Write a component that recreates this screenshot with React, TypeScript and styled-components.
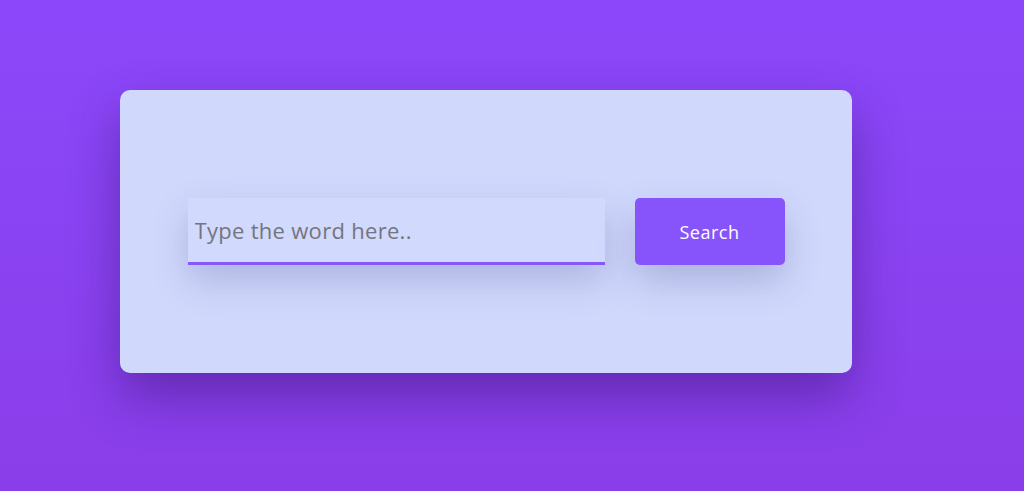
import React, { useState } from 'react';
import styled, { createGlobalStyle } from 'styled-components';

/* global */
const GlobalStyle = createGlobalStyle`
  * { box-sizing: border-box; }
  html, body { margin: 0; height: 100%; }
  body {
    font-family: "Open Sans", "Noto Sans", sans-serif;
    background: linear-gradient(180deg, #8b48fa 0%, #8a3ee9 100%);
  }
  #root { height: 100%; }
`;

export default function App() {
  const [word, setWord] = useState('');

  return (
    <>
      <GlobalStyle />
      <Page>
        <Card>
          <WordInput
            value={word}
            onChange={(e) => setWord(e.target.value)}
            placeholder="Type the word here.."
          />
          <SearchButton type="button">Search</SearchButton>
        </Card>
      </Page>
    </>
  );
}

/* style */
const Page = styled.div`
  height: 100%;
  padding: 90px 0 0 120px;
`;

const Card = styled.div`
  width: 732px;
  height: 283px;
  background: #d0d9fc;
  border-radius: 10px;
  display: flex;
  align-items: center;
  justify-content: center;
  gap: 30px;
  box-shadow: 0 24px 50px rgba(50, 15, 110, 0.45);
`;

const WordInput = styled.input`
  width: 417px;
  height: 67px;
  border: none;
  border-bottom: 3px solid #8657f9;
  background: #d1d9fd;
  padding: 0 7px;
  font-family: inherit;
  font-size: 22px;
  letter-spacing: 0.3px;
  color: #333;
  outline: none;
  box-shadow: 0 16px 36px rgba(60, 50, 130, 0.22);

  &::placeholder {
    color: #74757f;
  }
`;

const SearchButton = styled.button`
  width: 150px;
  height: 67px;
  border: none;
  border-radius: 5px;
  background: #8754fb;
  color: #fff;
  font-family: inherit;
  font-size: 18px;
  letter-spacing: 0.5px;
  cursor: pointer;
  box-shadow: 0 16px 36px rgba(60, 50, 130, 0.24);
`;
